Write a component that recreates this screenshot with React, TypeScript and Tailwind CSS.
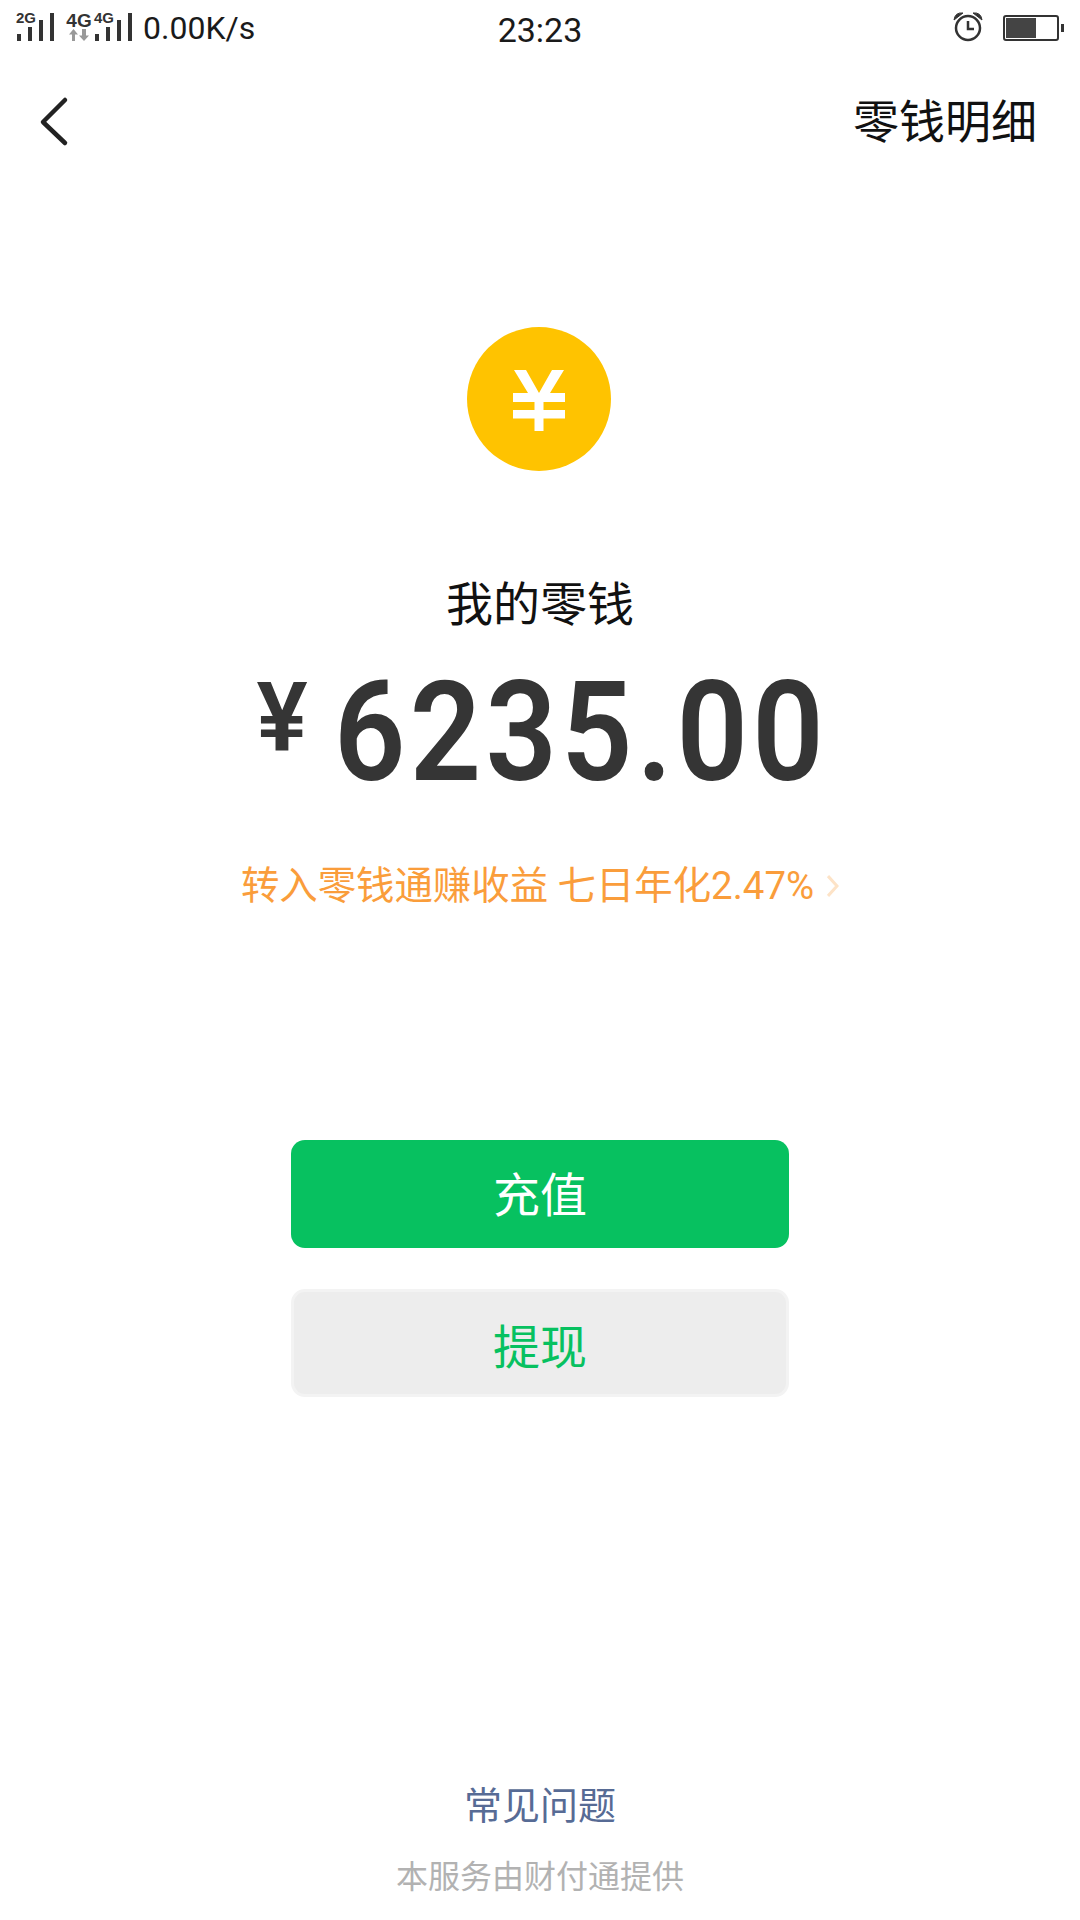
const cjk = "font-['Roboto','Noto_Sans_CJK_SC',sans-serif]";

function SignalBars() {
  return (
    <svg width="39" height="28" viewBox="0 0 39 28" fill="#333333">
      <rect x="1" y="21" width="4" height="7" />
      <rect x="12" y="14" width="4" height="14" />
      <rect x="23" y="7" width="4" height="21" />
      <rect x="34" y="0" width="4" height="28" />
    </svg>
  );
}

function StatusBar() {
  return (
    <div className="flex h-[60px] items-center justify-between text-[#1a1a1a]">
      <div className="flex h-full w-[300px] items-start pl-4 pt-[13px]">
        <div className="relative h-[28px] w-[39px]">
          <SignalBars />
          <span className="absolute left-0 top-[-3px] text-[15px] leading-[16px] font-bold font-['Liberation_Sans',sans-serif] text-[#333333]">2G</span>
        </div>
        <div className="ml-[11px] flex w-[26px] flex-col items-center">
          <span className="text-[19px] leading-[16px] font-bold font-['Liberation_Sans',sans-serif] text-[#333333]">4G</span>
          <svg width="20" height="12" viewBox="0 0 20 12" fill="#999999">
            <path d="M4.5 0 L9 5.5 L6 5.5 L6 12 L3 12 L3 5.5 L0 5.5 Z" />
            <path d="M15 12 L20 6.5 L17 6.5 L17 0 L13 0 L13 6.5 L10 6.5 Z" />
          </svg>
        </div>
        <div className="relative ml-[2px] h-[28px] w-[39px]">
          <SignalBars />
          <span className="absolute left-0 top-[-3px] text-[15px] leading-[16px] font-bold font-['Liberation_Sans',sans-serif] text-[#333333]">4G</span>
        </div>
        <span className="ml-[10px] mt-[-1px] text-[32px] leading-[32px] font-['Roboto',sans-serif]">0.00K/s</span>
      </div>
      <span className="text-[34px] leading-[32px] font-['Roboto',sans-serif]">23:23</span>
      <div className="flex w-[300px] items-center justify-end gap-[19px] pb-[4px] pr-4">
        <svg width="32" height="32" viewBox="0 0 32 32" fill="none" stroke="#333333" className="mb-[2px]">
          <circle cx="16" cy="17" r="12" strokeWidth="2.5" />
          <path d="M16 10 V18 H22" strokeWidth="2.5" />
          <path d="M2 9 Q3 1 11 2 Z" fill="#333333" strokeWidth="1" />
          <path d="M30 9 Q29 1 21 2 Z" fill="#333333" strokeWidth="1" />
        </svg>
        <div className="flex items-center">
          <div className="h-[26px] w-[56px] rounded-[3px] border-2 border-[#333333] p-[1px]">
            <div className="h-full w-[30px] bg-[#444444]" />
          </div>
          <div className="ml-[2px] h-[8px] w-[3px] bg-[#333333]" />
        </div>
      </div>
    </div>
  );
}

export default function App() {
  return (
    <div className={`flex h-[1920px] w-[1080px] flex-col overflow-hidden bg-white ${cjk}`}>
      <StatusBar />

      {/* Header */}
      <header className="flex h-[124px] items-center justify-between pl-[38px] pr-[43px]">
        <svg width="34" height="54" viewBox="0 0 34 54" fill="none" stroke="#222222" strokeWidth="4.5" strokeLinecap="round" strokeLinejoin="round">
          <path d="M27 5 L5 27 L27 48" />
        </svg>
        <span className="text-[46px] leading-none text-[#111111]">零钱明细</span>
      </header>

      {/* Balance */}
      <main className="flex flex-col items-center">
        <div className="mr-[2px] mt-[143px] flex h-[144px] w-[144px] items-center justify-center rounded-full bg-[#ffc300]">
          <svg width="144" height="144" viewBox="0 0 144 144" fill="#ffffff">
            <path d="M47 43 H59 L72 66 L85 43 H97 L83 66 H98 V75 H76.5 V83 H98 V91.5 H76.5 V104 H67.5 V91.5 H46 V83 H67.5 V75 H46 V66 H61 Z" />
          </svg>
        </div>
        <h1 className="mt-[111px] text-[47px] leading-[46px] font-normal text-[#111111]">我的零钱</h1>
        <div className="mt-[48px] flex h-[130px] w-[567px] items-start text-[#353535]">
          <span className="mt-[-13px] w-[77px] shrink-0 text-[96px] leading-[110px] font-semibold">¥</span>
          <span className="mt-[-18px] origin-left scale-x-90 text-[139px] leading-[150px] font-semibold tracking-[4.7px]">6235.00</span>
        </div>
        <div className="mt-[58px] flex items-center text-[#fa9d3b]">
          <span className="text-[38.4px] leading-[44px]">转入零钱通赚收益 七日年化2.47%</span>
          <svg width="12" height="24" viewBox="0 0 12 24" fill="none" stroke="#fde3c7" strokeWidth="3" className="ml-[13px]">
            <path d="M1 2 L10 12 L1 22" />
          </svg>
        </div>

        {/* Actions */}
        <button className="mt-[232px] h-[108px] w-[498px] rounded-[14px] bg-[#07c160] pt-[5px] text-[47px] text-white">充值</button>
        <button className="mt-[41px] h-[108px] w-[498px] rounded-[14px] border-[3px] border-[#f3f3f3] bg-[#ededed] pt-[10px] text-[47px] text-[#07c160]">提现</button>
      </main>

      {/* Footer */}
      <footer className="mt-auto flex flex-col items-center pb-[24px]">
        <span className="text-[38px] leading-[44px] text-[#576b95]">常见问题</span>
        <span className="mt-[30px] text-[32px] leading-[38px] text-[#b2b2b2]">本服务由财付通提供</span>
      </footer>
    </div>
  );
}
